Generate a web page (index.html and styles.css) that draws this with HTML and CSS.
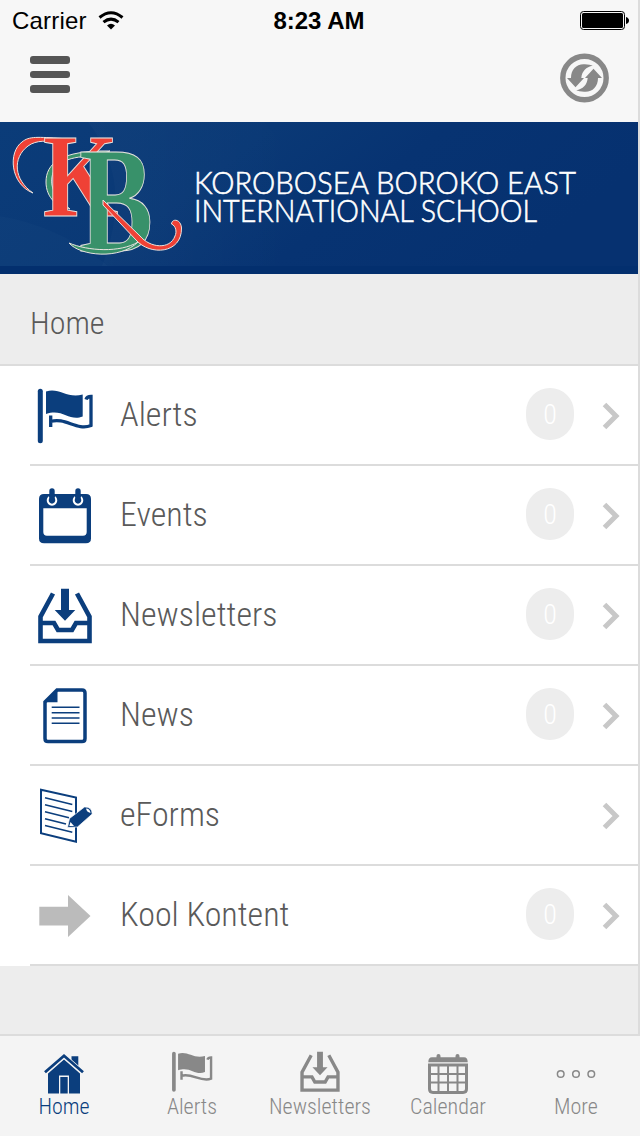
FILE: index.html
```html
<!DOCTYPE html>
<html lang="en">
  <head>
    <meta charset="utf-8" />
    <meta name="viewport" content="width=device-width, initial-scale=1.0" />
    <title>Korobosea Boroko East International School</title>
    <link rel="stylesheet" href="styles.css">
  </head>
  <body>
    <svg class="sprites" width="0" height="0">
      <symbol id="icon-flag" viewBox="0 0 60 60">
        <path d="M5.300 6.200V55.800" fill="none" stroke="currentColor" stroke-width="5" stroke-linecap="round" />
        <path d="M11 6.500C24 2 32 14 47.700 9.500V31.500C34 37 28 23 11 29Z" fill="currentColor" />
        <path d="M51 14.500Q52 11.500 56 11.500V40.500C42 46 30 32 15.700 36.500M15.700 30.500V42" fill="none" stroke="currentColor" stroke-width="3.300" />
      </symbol>
      <symbol id="icon-inbox" viewBox="0 0 60 60">
        <path d="M26 3.700h8V25h6.300L30 35.700L19.700 25H26Z" fill="currentColor" />
        <path d="M18 8.500L5.500 31.700V56H54.500V31.700L42 8.500M5.500 38H19L23 45H37L41 38H54.500" fill="none" stroke="currentColor" stroke-width="4.600" />
      </symbol>
      <symbol id="icon-chevron" viewBox="0 0 18 28">
        <path d="M2.500 2.500L14 14L2.500 25.500" fill="none" stroke="#c8c8c8" stroke-width="5" />
      </symbol>
    </svg>
    <div class="app">
      <div class="screen">
        <header class="header">
          <div class="status-bar">
            <div class="carrier">
              <span>Carrier</span>
              <svg width="26" height="20" viewBox="0 0 26 20">
                <path d="M1.500 6.500Q13 -3 24.500 6.500" fill="none" stroke="#000" stroke-width="3" />
                <path d="M5.500 11.200Q13 5 20.500 11.200" fill="none" stroke="#000" stroke-width="3" />
                <path d="M9 14.500Q13 11 17 14.500L13 18.500Z" />
              </svg>
            </div>
            <div class="time">8:23 AM</div>
            <svg class="battery" width="49" height="19" viewBox="0 0 49 19">
              <rect x=".5" y=".5" width="44" height="18" rx="3" fill="none" stroke="#000" />
              <rect x="2" y="2" width="41" height="15" rx="1.500" />
              <path d="M46 6Q49 7 49 9.500Q49 12 46 13Z" />
            </svg>
          </div>
          <div class="nav-bar">
            <div class="menu-btn"><i></i><i></i><i></i></div>
            <svg width="50" height="50" viewBox="0 0 50 50">
              <circle cx="25.500" cy="25" r="21.700" fill="none" stroke="#888" stroke-width="5.400" />
              <path id="turn" d="M8 25H12C12 16 18 10.500 26 11.300Q31 11.500 33.800 12.700C27 14 23 18 22.300 25H25L16.500 34.300Z" fill="#888" />
              <use href="#turn" transform="rotate(180 25.500 25)" />
            </svg>
          </div>
        </header>
        <svg class="banner" width="638" height="152" viewBox="0 0 638 152">
          <defs>
            <linearGradient id="sky" x1="0" y1="0" x2="1" y2=".3">
              <stop offset="0" stop-color="#0b3c79" />
              <stop offset=".4" stop-color="#0a3976" />
              <stop offset=".65" stop-color="#073372" />
              <stop offset="1" stop-color="#063170" />
            </linearGradient>
            <linearGradient id="beam" x1="0" y1="0" x2="1" y2="0">
              <stop offset="0" stop-color="#fff" stop-opacity=".02" />
              <stop offset="1" stop-color="#fff" stop-opacity="0" />
            </linearGradient>
          </defs>
          <rect width="638" height="152" fill="url(#sky)" />
          <path d="M0 94Q60 104 108 144H0Z" fill="#fff" opacity=".015" />
          <path d="M88 0Q135 60 102 144H292Q320 60 264 0Z" fill="url(#beam)" />
          <rect y="144" width="638" height="8" fill="#032f6e" />
          <g class="monogram">
            <path class="red" d="M33 71C10 62 8 30 22 20C29 14 38 15 62 16.500V22C48 18 36 18 28 24C12 36 14 58 33 71Z" />
            <path class="green" d="M110 29C60 28 46 42 46 60C46 76 58 86 70 87C56 76 50 66 52 55C54 40 70 34 96 34Z" />
            <text class="red" transform="translate(43 94) scale(.82 1)" font-size="118">K</text>
            <text class="green" transform="translate(79 129) scale(.74 1)" font-size="150">B</text>
            <path class="green" d="M69 121C80 134 120 138 138 120C120 131 88 129 69 121Z" />
            <path class="red" d="M103 83L136 118C150 134 182 132 181.500 106C181 97 172 96 171.500 102C176 104 177 110 175 114C170 128 150 126 140 114L103 78Z" />
          </g>
          <g class="school-name">
            <text x="194" y="72" textLength="382" lengthAdjust="spacingAndGlyphs">KOROBOSEA BOROKO EAST</text>
            <text x="194" y="100" textLength="343" lengthAdjust="spacingAndGlyphs">INTERNATIONAL SCHOOL</text>
          </g>
        </svg>
        <h1 class="page-title">Home</h1>
        <ul class="menu">
          <li class="menu-item">
            <svg class="icon"><use href="#icon-flag" /></svg>
            <span class="label">Alerts</span>
            <span class="badge">0</span>
            <svg class="chevron"><use href="#icon-chevron" /></svg>
          </li>
          <li class="menu-item">
            <svg class="icon" viewBox="0 0 60 60">
              <path fill="currentColor" fill-rule="evenodd" d="M9 9H51Q56 9 56 14V53.500Q56 58.300 51 58.300H9Q4 58.300 4 53.500V14Q4 9 9 9ZM8.300 23.300V47Q8.300 50.700 12 50.700H48Q51.700 50.700 51.700 47V23.300Z" />
              <path d="M14.300 12A4.300 4.300 0 1 0 19.700 12M40.300 12A4.300 4.300 0 1 0 45.700 12" fill="none" stroke="#fff" stroke-width="2" />
              <path d="M17 6V14.500M43 6V14.500" stroke="currentColor" stroke-width="5.400" stroke-linecap="round" />
            </svg>
            <span class="label">Events</span>
            <span class="badge">0</span>
            <svg class="chevron"><use href="#icon-chevron" /></svg>
          </li>
          <li class="menu-item">
            <svg class="icon"><use href="#icon-inbox" /></svg>
            <span class="label">Newsletters</span>
            <span class="badge">0</span>
            <svg class="chevron"><use href="#icon-chevron" /></svg>
          </li>
          <li class="menu-item">
            <svg class="icon" viewBox="0 0 60 60">
              <path d="M22 5H47Q50 5 50 8V53.500Q50 56.600 47 56.600H13Q10 56.600 10 53.500V17Z" fill="none" stroke="currentColor" stroke-width="3.500" />
              <path d="M22.500 4V17.300H9Z" fill="currentColor" />
              <path d="M16.700 22.300H44.500M16.700 27.700H44.500M16.700 33H44.500M16.700 38.300H44.500" stroke="currentColor" stroke-width="1.500" />
            </svg>
            <span class="label">News</span>
            <span class="badge">0</span>
            <svg class="chevron"><use href="#icon-chevron" /></svg>
          </li>
          <li class="menu-item">
            <svg class="icon" viewBox="0 0 60 60">
              <path d="M6 4.800L41 12.500V56.800L6 48.300Z" fill="none" stroke="currentColor" stroke-width="2" />
              <path d="M10 12.700L37.300 19.500M10 19.700L37.300 26.500M10 26.700L34 32.700M10 33.700L31 39M10 40.500L37.300 47.300" stroke="currentColor" stroke-width="1.700" />
              <path d="M32.500 42.500L34.500 33.500L49.500 22Q57 21.500 57.200 29L42.500 42Z" fill="currentColor" stroke="#fff" stroke-width=".7" />
              <path d="M34.300 41L35.500 37L39 41ZM51 23.500Q55 23.500 55.500 28Q51.500 27 51 23.500Z" fill="#fff" />
            </svg>
            <span class="label">eForms</span>
            <svg class="chevron"><use href="#icon-chevron" /></svg>
          </li>
          <li class="menu-item">
            <svg class="icon icon-grey" viewBox="0 0 60 60">
              <path d="M4.300 21.700H33V10L55.500 31L33 52V40.500H4.300Z" fill="currentColor" />
            </svg>
            <span class="label">Kool Kontent</span>
            <span class="badge">0</span>
            <svg class="chevron"><use href="#icon-chevron" /></svg>
          </li>
        </ul>
      </div>
      <nav class="tab-bar">
        <div class="tab active">
          <svg viewBox="0 0 44 44">
            <path d="M29.500 14V7.300H36.300V20ZM6 23.500L22 10L38 23.500V44.600H27V26.500H17V44.600H6ZM18.300 28H25.700V44.600H18.300Z" fill="currentColor" />
            <path d="M3 23.800L22 7.200L41 23.800" fill="none" stroke="#f4f4f4" stroke-width="5" />
            <path d="M3 23.300L22 6.800L41 23.300" fill="none" stroke="currentColor" stroke-width="2.800" />
          </svg>
          <span>Home</span>
        </div>
        <div class="tab">
          <svg><use href="#icon-flag" /></svg>
          <span>Alerts</span>
        </div>
        <div class="tab">
          <svg><use href="#icon-inbox" /></svg>
          <span>Newsletters</span>
        </div>
        <div class="tab">
          <svg viewBox="0 0 44 44">
            <path d="M2.300 13.300Q2.300 8.300 6 8.300H38Q41.700 8.300 41.700 13.300Z" fill="currentColor" />
            <path d="M12.500 7V10M31.500 7V10" stroke="currentColor" stroke-width="4" stroke-linecap="round" />
            <path d="M3.500 16H40.500V40Q40.500 43.400 37 43.400H7Q3.500 43.400 3.500 40Z" fill="none" stroke="currentColor" stroke-width="3" />
            <path d="M4 25H40M4 33.500H40M12.500 16V43M22 16V43M31.500 16V43" stroke="currentColor" stroke-width="2" />
          </svg>
          <span>Calendar</span>
        </div>
        <div class="tab">
          <svg viewBox="0 0 44 44">
            <g fill="none" stroke="currentColor" stroke-width="1.500">
              <circle cx="6.700" cy="25" r="3.300" />
              <circle cx="22" cy="25" r="3.300" />
              <circle cx="37.300" cy="25" r="3.300" />
            </g>
          </svg>
          <span>More</span>
        </div>
      </nav>
    </div>
  </body>
</html>
```

FILE: styles.css
```css
:root {
  --main-color: #0b3e7d;
  --text-color: #5a5a5a;
  --line-color: #dcdcdc;
  --page-background: #ededed;
}

* {
  box-sizing: border-box;
}

body {
  margin: 0;
  font-family: "Roboto Condensed", Roboto, sans-serif;
  font-stretch: condensed;
  font-weight: 300;
  color: var(--text-color);
  background: var(--page-background);
}

.sprites {
  display: none;
}

.app {
  width: 640px;
  height: 1136px;
  display: flex;
  flex-direction: column;
}

.screen {
  flex: 1;
  border-right: 2px solid var(--line-color);
  border-bottom: 2px solid var(--line-color);
}

.header {
  height: 122px;
  background: #f7f7f7;
}

.status-bar {
  height: 41px;
  display: grid;
  grid-template-columns: 1fr auto 1fr;
  align-items: center;
  padding: 0 9px 0 12px;
  font-family: "Liberation Sans", Arial, sans-serif;
  font-size: 24px;
  font-weight: normal;
  color: #000;
}

.carrier {
  display: flex;
  align-items: center;
  gap: 11px;
  letter-spacing: .2px;
}

.time {
  font-weight: bold;
  font-size: 24px;
  padding-top: 1px;
  margin-right: 3px;
}

.battery {
  justify-self: end;
}

.nav-bar {
  display: flex;
  justify-content: space-between;
  align-items: flex-start;
  padding: 12px 29px 0 30px;
}

.menu-btn {
  display: grid;
  gap: 7px;
  padding-top: 3px;
}

.menu-btn i {
  width: 40px;
  height: 7.600px;
  border-radius: 3px;
  background: #555;
}

.banner {
  display: block;
}

.monogram {
  font-family: "Liberation Serif", serif;
  font-weight: bold;
  stroke: #e8e4e0;
  stroke-width: 1;
}

.monogram .red {
  fill: #ef4136;
}

.monogram .green {
  fill: #38916a;
}

.school-name {
  font-family: Lato, sans-serif;
  font-size: 31px;
  font-weight: 300;
  fill: #fff;
  stroke: #fff;
  stroke-width: .6;
}

.page-title {
  height: 92px;
  margin: 0;
  padding: 5px 30px 0;
  border-bottom: 2px solid var(--line-color);
  font-size: 32px;
  font-weight: 300;
  line-height: 88px;
}

.menu {
  margin: 0;
  padding: 0 0 0 30px;
  list-style: none;
  background: #fff;
}

.menu-item {
  height: 100px;
  display: flex;
  align-items: center;
  padding: 0 18px 0 5px;
  border-bottom: 2px solid var(--line-color);
}

.icon {
  width: 60px;
  height: 60px;
  color: var(--main-color);
}

.icon-grey {
  color: #bbb;
}

.label {
  flex: 1;
  padding: 0 0 2px 25px;
  font-size: 34px;
}

.badge {
  width: 48px;
  height: 52px;
  margin: 0 28px 2px 0;
  border-radius: 24px;
  background: var(--page-background);
  color: #fff;
  font-size: 28px;
  line-height: 54px;
  text-align: center;
}

.chevron {
  width: 18px;
  height: 28px;
  margin-top: 2px;
}

.tab-bar {
  height: 100px;
  display: grid;
  grid-template-columns: repeat(5, 1fr);
  padding-top: 13px;
  background: #f4f4f4;
  color: #888;
}

.tab {
  display: flex;
  flex-direction: column;
  align-items: center;
  font-size: 22px;
  line-height: 28px;
}

.tab svg {
  width: 44px;
  height: 44px;
  overflow: visible;
}

.active {
  color: var(--main-color);
}
```
